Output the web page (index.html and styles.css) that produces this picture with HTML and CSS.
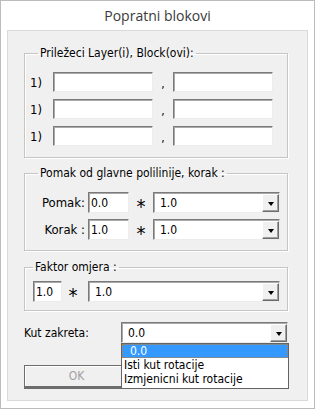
FILE: index.html
```html
<!DOCTYPE html>
<html lang="hr">

<head>
    <meta charset="UTF-8">
    <meta name="viewport" content="width=device-width, initial-scale=1.0">
    <title>Popratni blokovi</title>
    <link rel="stylesheet" href="styles.css">
</head>

<body>
    <div class="window">
        <div class="title">Popratni blokovi</div>
        <div class="panel">
            <fieldset class="group group-layers">
                <legend>Priležeci Layer(i), Block(ovi):</legend>
                <div class="pair-row">
                    <span class="num">1)</span>
                    <input class="field wide" type="text">
                    <span class="comma">,</span>
                    <input class="field wide" type="text">
                </div>
                <div class="pair-row">
                    <span class="num">1)</span>
                    <input class="field wide" type="text">
                    <span class="comma">,</span>
                    <input class="field wide" type="text">
                </div>
                <div class="pair-row">
                    <span class="num">1)</span>
                    <input class="field wide" type="text">
                    <span class="comma">,</span>
                    <input class="field wide" type="text">
                </div>
            </fieldset>

            <fieldset class="group group-offset">
                <legend>Pomak od glavne polilinije, korak :</legend>
                <div class="calc-row">
                    <label class="calc-label">Pomak:</label>
                    <input class="field short" type="text" value="0.0">
                    <span class="star">*</span>
                    <div class="combo offset-combo">
                        <span class="combo-value">1.0</span>
                        <span class="combo-arrow"></span>
                    </div>
                </div>
                <div class="calc-row">
                    <label class="calc-label">Korak :</label>
                    <input class="field short" type="text" value="1.0">
                    <span class="star">*</span>
                    <div class="combo offset-combo">
                        <span class="combo-value">1.0</span>
                        <span class="combo-arrow"></span>
                    </div>
                </div>
            </fieldset>

            <fieldset class="group group-scale">
                <legend>Faktor omjera :</legend>
                <div class="calc-row">
                    <input class="field tiny" type="text" value="1.0">
                    <span class="star scale-star">*</span>
                    <div class="combo scale-combo">
                        <span class="combo-value">1.0</span>
                        <span class="combo-arrow"></span>
                    </div>
                </div>
            </fieldset>

            <div class="rotation-row">
                <label class="rotation-label">Kut zakreta:</label>
                <div class="combo rotation-combo">
                    <span class="combo-value">0.0</span>
                    <span class="combo-arrow"></span>
                    <ul class="dropdown">
                        <li class="selected">0.0</li>
                        <li>Isti kut rotacije</li>
                        <li>Izmjenicni kut rotacije</li>
                    </ul>
                </div>
            </div>

            <div class="buttons">
                <button class="btn" disabled>OK</button>
                <!-- second button sits under the open list -->
                <button class="btn" aria-label="Odustani"></button>
            </div>
        </div>
    </div>
</body>

</html>
```

FILE: styles.css
```css
body {
    margin: 0;
    font-family: "DejaVu Sans Condensed", "DejaVu Sans", sans-serif;
    font-size: 12px;
    color: #000;
    background-color: #fff;
}

.window {
    width: 315px;
    height: 409px;
    box-sizing: border-box;
    border: 1px solid #bcbcbc;
    background-color: #fff;
    padding: 0 6px 7px 6px;
    display: flex;
    flex-direction: column;
}

.title {
    height: 29px;
    line-height: 30px;
    text-align: center;
    font-family: "Open Sans", "Noto Sans", sans-serif;
    font-size: 14px;
    color: #3a3a3a;
}

.panel {
    flex: 1;
    position: relative;
    border: 1px solid #d9d9d9;
    background-color: #f0f0f0;
    padding: 16px 19px 0 16px;
}

/* group boxes */
.group {
    margin: 0;
    padding: 12px 0 11px 5px;
    border: 1px solid #c5c5c5;
    box-shadow: inset 1px 1px 0 #fff, 1px 1px 0 #fff;
}

.group legend {
    padding: 0 2px;
    line-height: 13px;
    margin-left: 8px;
}

.group-offset {
    margin-top: 9px;
    padding: 12px 0 10px 0;
}

.group-offset legend {
    margin-left: 13px;
}

.group-scale {
    margin-top: 10px;
    padding: 7px 0 8px 8px;
}

.group-scale legend {
    margin-left: 0;
}

/* text fields */
.field {
    box-sizing: border-box;
    margin: 0;
    height: 20px;
    padding: 1px 2px 0 2px;
    font-family: inherit;
    font-size: 12px;
    background-color: #fff;
    border: 1px solid;
    border-color: #7a7a7a #ececec #ececec #7a7a7a;
    box-shadow: inset 1px 1px 0 #a9a9a9;
    outline: none;
}

.wide {
    width: 100px;
}

.short {
    width: 41px;
    height: 21px;
}

.tiny {
    width: 29px;
    height: 21px;
}

.pair-row {
    display: flex;
    align-items: center;
    height: 20px;
}

.pair-row + .pair-row {
    margin-top: 7px;
}

.num {
    width: 23px;
    font-size: 13px;
}

.comma {
    width: 20px;
    text-align: center;
    padding-top: 4px;
}

.calc-row {
    display: flex;
    align-items: center;
    height: 21px;
}

.calc-row + .calc-row {
    margin-top: 6px;
}

.calc-label {
    width: 60px;
    margin-right: 3px;
    text-align: right;
    font-size: 13px;
}

.star {
    width: 24px;
    text-align: center;
    font-size: 20px;
    line-height: 21px;
    padding-top: 7px;
}

.scale-star {
    width: 22px;
    margin-right: 4px;
}

/* combo boxes */
.combo {
    position: relative;
    box-sizing: border-box;
    height: 21px;
    display: flex;
    align-items: center;
    background-color: #fff;
    border: 1px solid;
    border-color: #7a7a7a #ececec #ececec #7a7a7a;
    box-shadow: inset 1px 1px 0 #a9a9a9;
}

.offset-combo {
    width: 127px;
}

.scale-combo {
    width: 192px;
}

.rotation-combo {
    width: 167px;
}

.combo-value {
    flex: 1;
    padding-left: 6px;
}

.combo-arrow {
    align-self: stretch;
    width: 17px;
    box-sizing: border-box;
    margin: 1px 0 0 0;
    background-color: #f0f0f0;
    border: 1px solid;
    border-color: #fff #6d6d6d #6d6d6d #fff;
    box-shadow: inset -1px -1px 0 #a0a0a0;
    display: flex;
    align-items: center;
    justify-content: center;
}

.combo-arrow::after {
    content: "";
    border-left: 3.5px solid transparent;
    border-right: 3.5px solid transparent;
    border-top: 4px solid #000;
    margin-top: 1px;
}

/* rotation */
.rotation-row {
    display: flex;
    align-items: center;
    margin-top: 11px;
    height: 21px;
}

.rotation-label {
    width: 97px;
}

.dropdown {
    position: absolute;
    top: 20px;
    left: -1px;
    width: 168px;
    box-sizing: border-box;
    margin: 0;
    padding: 0 0 2px 0;
    list-style: none;
    background-color: #fff;
    border: 1px solid #646464;
    z-index: 2;
}

.dropdown li {
    line-height: 14px;
    padding-left: 2px;
}

.dropdown li.selected {
    background-color: #3399ff;
    color: #fff;
    padding-left: 8px;
    outline: 1px dotted #c77b2e;
    outline-offset: -1px;
}

/* buttons */
.buttons {
    display: flex;
    justify-content: space-between;
    margin-top: 22px;
}

.btn {
    width: 105px;
    height: 24px;
    box-sizing: border-box;
    margin: 0;
    font-family: inherit;
    font-size: 12px;
    color: #000;
    background-color: #f0f0f0;
    border: 1px solid #6d6d6d;
    border-bottom-width: 3px;
    box-shadow: inset 1px 1px 0 #fff;
}

.btn:disabled {
    color: #a0a0a0;
}
```
